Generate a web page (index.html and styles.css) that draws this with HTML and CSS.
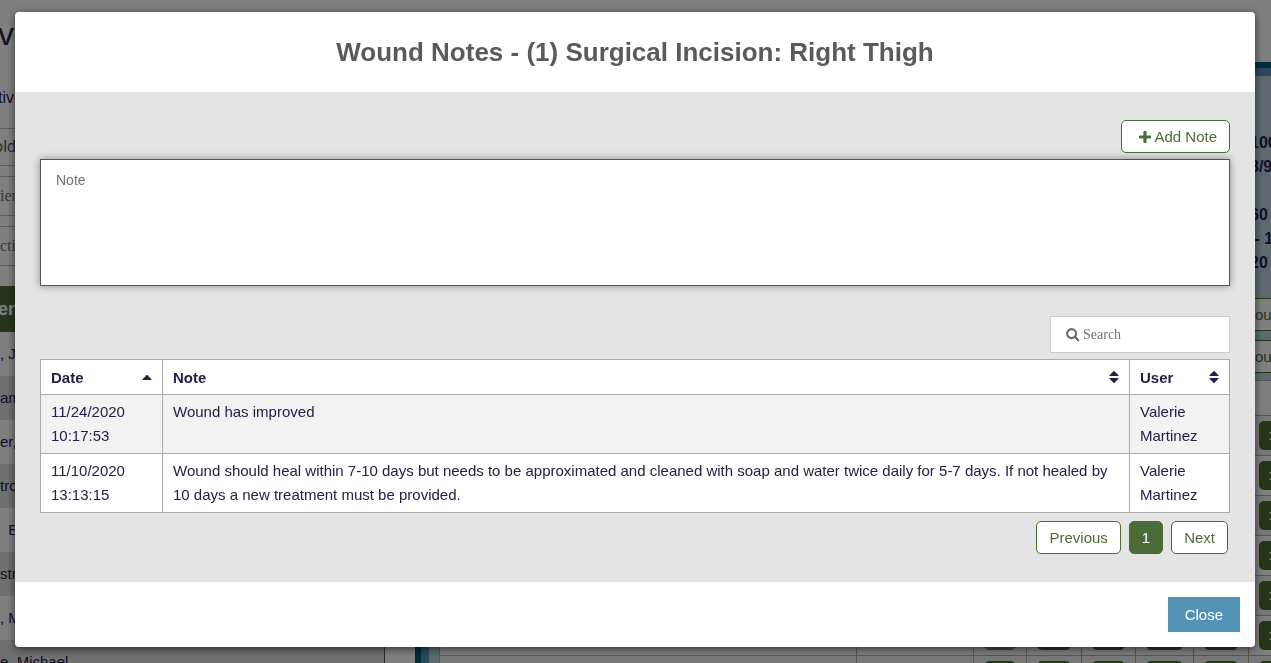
FILE: index.html
```html
<!DOCTYPE html>
<html lang="en">
<head>
    <meta charset="UTF-8">
    <meta name="viewport" content="width=device-width, initial-scale=1.0">
    <title>Wound Notes</title>
    <link rel="stylesheet" href="styles.css">
</head>
<body>
    <div class="page" aria-hidden="true">
        <div class="sidebar">
            <h1>ve</h1>
            <p class="status">tive</p>
            <div class="filter household">old</div>
            <div class="filter">ient</div>
            <div class="filter">ctive</div>
            <div class="list-header">ent</div>
            <ul class="patients">
                <li>, J</li>
                <li>am</li>
                <li>er,</li>
                <li>tro</li>
                <li>&nbsp; E</li>
                <li>stro</li>
                <li>, M</li>
                <li>e, Michael</li>
            </ul>
        </div>
        <div class="panel">
            <div class="vitals">
                <div>100</div>
                <div>8/90</div>
                <div>&nbsp;</div>
                <div>60</div>
                <div>&nbsp;- 18</div>
                <div>20</div>
            </div>
            <div class="wound-button">Wound</div>
            <div class="wound-button">Wound</div>
            <table class="chart">
                <colgroup>
                    <col>
                    <col class="w117">
                    <col class="w53">
                    <col class="w55">
                    <col class="w54">
                    <col class="w58">
                    <col class="w55">
                    <col class="w63">
                </colgroup>
                <tr class="chart-head"><td></td><td></td><td></td><td></td><td></td><td></td><td></td><td></td></tr>
                <tr><td></td><td></td><td></td><td></td><td></td><td></td><td></td><td><span class="dose">:</span></td></tr>
                <tr><td></td><td></td><td></td><td></td><td></td><td></td><td></td><td><span class="dose">:</span></td></tr>
                <tr><td></td><td></td><td></td><td></td><td></td><td></td><td></td><td><span class="dose">:</span></td></tr>
                <tr><td></td><td></td><td></td><td></td><td></td><td></td><td></td><td><span class="dose">:</span></td></tr>
                <tr><td></td><td></td><td></td><td></td><td></td><td></td><td></td><td><span class="dose">:</span></td></tr>
                <tr><td></td><td></td><td><span class="dose off"></span></td><td><span class="dose"></span></td><td><span class="dose"></span></td><td><span class="dose"></span></td><td><span class="dose"></span></td><td><span class="dose">:</span></td></tr>
                <tr><td></td><td></td><td><span class="dose"></span></td><td><span class="dose"></span></td><td><span class="dose"></span></td><td><span class="dose"></span></td><td><span class="dose"></span></td><td><span class="dose"></span></td></tr>
            </table>
        </div>
    </div>

    <div class="overlay">
        <div class="modal" role="dialog" aria-modal="true" aria-labelledby="modalTitle">
            <div class="modal-header">
                <h2 id="modalTitle">Wound Notes - (1) Surgical Incision: Right Thigh</h2>
            </div>
            <div class="modal-body">
                <div class="toolbar">
                    <button type="button" class="btn btn-add">
                        <svg width="12" height="12" viewBox="0 0 12 12"><path d="M5.200 0h1.600q.8 0 .8.800v3.600h3.600q.8 0 .8.800v1.600q0 .8-.8.800H7.600v3.600q0 .8-.8.800H5.200q-.8 0-.8-.8V7.600H.8Q0 7.600 0 6.800V5.200q0-.8.800-.8h3.600V.8q0-.8.800-.8z" fill="currentColor"/></svg>
                        Add Note
                    </button>
                </div>
                <textarea class="note" placeholder="Note" aria-label="Note"></textarea>
                <div class="toolbar">
                    <label class="search">
                        <svg width="14" height="14" viewBox="0 0 14 14"><circle cx="5.6" cy="5.6" r="4.5" fill="none" stroke="currentColor" stroke-width="2.1"/><path d="M9 9l3.200 3.200" stroke="currentColor" stroke-width="2.3" stroke-linecap="round"/></svg>
                        <input type="text" placeholder="Search" aria-label="Search">
                    </label>
                </div>
                <table class="notes">
                    <thead>
                        <tr>
                            <th class="col-date">
                                <button type="button" class="sort">Date
                                    <svg width="10" height="14" viewBox="0 0 10 14"><path d="M1 10Q0 10 .5 9.200L4.500 5.200Q5 4.700 5.500 5.200L9.500 9.200Q10 10 9 10z" fill="currentColor"/></svg>
                                </button>
                            </th>
                            <th>
                                <button type="button" class="sort">Note
                                    <svg width="10" height="14" viewBox="0 0 10 14"><path d="M1 6Q0 6 .5 5.200L4.500 1.200Q5 .7 5.500 1.200L9.500 5.200Q10 6 9 6zM1 8Q0 8 .5 8.800L4.500 12.800Q5 13.300 5.500 12.800L9.500 8.800Q10 8 9 8z" fill="currentColor"/></svg>
                                </button>
                            </th>
                            <th class="col-user">
                                <button type="button" class="sort">User
                                    <svg width="10" height="14" viewBox="0 0 10 14"><path d="M1 6Q0 6 .5 5.200L4.500 1.200Q5 .7 5.500 1.200L9.500 5.200Q10 6 9 6zM1 8Q0 8 .5 8.800L4.500 12.800Q5 13.300 5.500 12.800L9.500 8.800Q10 8 9 8z" fill="currentColor"/></svg>
                                </button>
                            </th>
                        </tr>
                    </thead>
                    <tbody>
                        <tr>
                            <td>11/24/2020 10:17:53</td>
                            <td>Wound has improved</td>
                            <td>Valerie Martinez</td>
                        </tr>
                        <tr>
                            <td>11/10/2020 13:13:15</td>
                            <td>Wound should heal within 7-10 days but needs to be approximated and cleaned with soap and water twice daily for 5-7 days. If not healed by 10 days a new treatment must be provided.</td>
                            <td>Valerie Martinez</td>
                        </tr>
                    </tbody>
                </table>
                <div class="pagination">
                    <button type="button" class="btn">Previous</button>
                    <button type="button" class="btn active">1</button>
                    <button type="button" class="btn">Next</button>
                </div>
            </div>
            <div class="modal-footer">
                <button type="button" class="btn-close">Close</button>
            </div>
        </div>
    </div>
</body>
</html>
```

FILE: styles.css
```css
* {
    box-sizing: border-box;
}
body {
    margin: 0;
    height: 100vh;
    overflow: hidden;
    font-family: "Liberation Sans", Arial, sans-serif;
    font-size: 15px;
    line-height: 24px;
    color: #252047;
    background: #fff;
}
button, input, textarea {
    font-family: inherit;
    font-size: inherit;
}

/* page behind the dialog */
.page {
    display: flex;
    gap: 30px;
    margin-right: -41px;
}
.sidebar {
    width: 385px;
    flex: none;
    overflow: hidden;
    font-size: 16px;
    text-indent: -2px;
}
.sidebar h1 {
    margin: 12px 0 30px;
    font-size: 32px;
    font-weight: normal;
    line-height: 44px;
}
.status {
    margin: 0 0 18px;
}
.filter {
    height: 40px;
    margin-bottom: 10px;
    border: 1px solid #bbb;
    border-left: 0;
    font-family: "Liberation Serif", "Times New Roman", serif;
    line-height: 38px;
    color: #777;
    text-indent: 0;
}
.household {
    height: 38px;
    line-height: 36px;
    font-family: Roboto, sans-serif;
    color: #555;
    text-indent: -6px;
}
.list-header {
    height: 46px;
    margin-top: 20px;
    background: #4b6c36;
    color: #fff;
    font-size: 18px;
    font-weight: bold;
    line-height: 46px;
}
.patients {
    margin: 0;
    padding: 0;
    list-style: none;
    border-right: 1px solid #555;
    font-size: 15px;
    text-indent: 0;
}
.patients li {
    height: 44px;
    line-height: 44px;
}
.patients li:nth-child(even) {
    background: #e0e0e0;
}
.panel {
    flex: 1;
    margin-top: 62px;
    border-top: 6px solid #005878;
    border-left: 6px solid #005878;
    background: #bad3df;
    box-shadow: inset 8px 8px #5492b5;
    padding: 63px 0 0 18px;
}
.vitals {
    width: 62px;
    height: 167px;
    margin-left: auto;
    font-size: 16px;
    font-weight: bold;
}
.wound-button {
    width: 82px;
    height: 33px;
    margin: 0 0 9px auto;
    padding-left: 10px;
    border: 1px solid #4b6c36;
    background: #fff;
    color: #4b6c36;
    line-height: 31px;
}
.chart {
    width: 100%;
    margin-top: -2px;
    table-layout: fixed;
    border-collapse: collapse;
    background: #fff;
}
.chart td {
    height: 40px;
    padding: 5px 10px;
    border: 1px solid #aaa;
}
.chart .chart-head td {
    height: 35px;
}
.chart tr:nth-child(even) {
    background: #f0f0f0;
}
.w53 { width: 53px; }
.w54 { width: 54px; }
.w55 { width: 55px; }
.w58 { width: 58px; }
.w63 { width: 63px; }
.w117 { width: 117px; }
.dose {
    display: block;
    height: 29px;
    padding-left: 9px;
    border-radius: 5px;
    background: #4b6c36;
    color: #fff;
    line-height: 28px;
}
.dose.off {
    background: #819874;
}

/* dialog */
.overlay {
    position: fixed;
    inset: 0;
    overflow: auto;
    background: rgba(0, 0, 0, 0.5);
}
.modal {
    margin: 12px 16px 12px 15px;
    border-radius: 4px;
    background: #fff;
    box-shadow: 0 2px 8px rgba(0, 0, 0, 0.6);
}
.modal-header {
    padding: 20px;
    text-align: center;
}
.modal-header h2 {
    margin: 0;
    font-size: 26px;
    line-height: 40px;
    color: #5a5a5a;
}
.modal-body {
    padding: 28px 25px;
    background: #e4e4e4;
}
.toolbar {
    display: flex;
    justify-content: flex-end;
    margin-bottom: 6px;
}
.btn {
    height: 33px;
    padding: 0 12px;
    border: 1px solid #4b6c36;
    border-radius: 5px;
    background: #fff;
    color: #4b6c36;
    cursor: pointer;
}
.btn.active {
    background: #4b6c36;
    color: #fff;
}
.btn-add {
    display: flex;
    align-items: center;
    gap: 3px;
    padding-left: 17px;
}
.note {
    display: block;
    width: 100%;
    height: 127px;
    margin-bottom: 30px;
    padding: 10px 15px;
    border: 1px solid #555;
    border-radius: 0;
    box-shadow: 0 0 8px rgba(0, 0, 0, 0.4);
    font-size: 14px;
    line-height: 20px;
    resize: none;
    outline: 0;
}
.note::placeholder, .search input::placeholder {
    color: #6c757d;
    opacity: 1;
}
.search {
    display: flex;
    align-items: center;
    gap: 3px;
    width: 180px;
    height: 37px;
    padding: 0 15px;
    border: 1px solid #ccc;
    background: #fff;
    color: #5f6b75;
}
.search svg {
    flex: none;
}
.search input {
    width: 100%;
    padding: 0;
    border: 0;
    outline: 0;
    font-family: "Liberation Serif", "Times New Roman", serif;
    font-size: 14px;
}
.notes {
    width: 100%;
    table-layout: fixed;
    border-collapse: collapse;
    background: #fff;
}
.notes th, .notes td {
    padding: 5px 10px;
    border: 1px solid #aaa;
    text-align: left;
    vertical-align: top;
}
.notes tbody tr:nth-child(odd) {
    background: #f2f2f2;
}
.col-date {
    width: 122px;
}
.col-user {
    width: 100px;
}
.sort {
    display: flex;
    align-items: center;
    justify-content: space-between;
    width: 100%;
    height: 24px;
    padding: 0;
    border: 0;
    background: none;
    color: inherit;
    font-weight: bold;
    cursor: pointer;
}
.pagination {
    display: flex;
    justify-content: flex-end;
    gap: 8px;
    margin-top: 8px;
    padding-right: 2px;
}
.modal-footer {
    display: flex;
    justify-content: flex-end;
    padding: 15px;
}
.btn-close {
    height: 35px;
    padding: 0 17px;
    border: 0;
    background: #5492b5;
    color: #fff;
    cursor: pointer;
}
```
